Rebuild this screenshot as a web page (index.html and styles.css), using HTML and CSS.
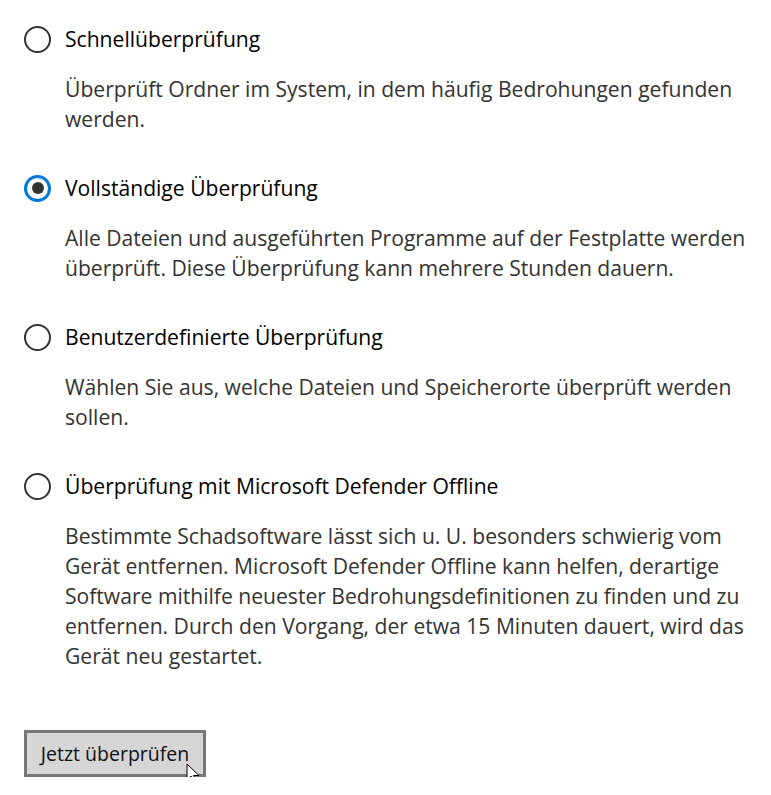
FILE: index.html
```html
<!DOCTYPE html>
<html lang="de">
<head>
<meta charset="utf-8">
<link rel="stylesheet" href="styles.css">
</head>
<body>
<div class="page">
  <div class="option">
    <label class="radio-row"><span class="radio"></span><span class="title">Schnellüberprüfung</span></label>
    <p class="desc">Überprüft Ordner im System, in dem häufig Bedrohungen gefunden werden.</p>
  </div>
  <div class="option">
    <label class="radio-row"><span class="radio checked"></span><span class="title">Vollständige Überprüfung</span></label>
    <p class="desc">Alle Dateien und ausgeführten Programme auf der Festplatte werden überprüft. Diese Überprüfung kann mehrere Stunden dauern.</p>
  </div>
  <div class="option">
    <label class="radio-row"><span class="radio"></span><span class="title">Benutzerdefinierte Überprüfung</span></label>
    <p class="desc">Wählen Sie aus, welche Dateien und Speicherorte überprüft werden sollen.</p>
  </div>
  <div class="option">
    <label class="radio-row"><span class="radio"></span><span class="title">Überprüfung mit Microsoft Defender Offline</span></label>
    <p class="desc">Bestimmte Schadsoftware lässt sich u. U. besonders schwierig vom Gerät entfernen. Microsoft Defender Offline kann helfen, derartige Software mithilfe neuester Bedrohungsdefinitionen zu finden und zu entfernen. Durch den Vorgang, der etwa 15 Minuten dauert, wird das Gerät neu gestartet.</p>
  </div>
  <div class="actions">
    <button class="btn">Jetzt überprüfen</button>
    <svg class="cursor" width="14" height="22" viewBox="0 0 14 22"><path d="M1 1 L1 17 L5 13 L8 20 L10.5 19 L7.5 12.5 L13 12.5 Z" fill="#fff" stroke="#000" stroke-width="1" stroke-linejoin="round"/></svg>
  </div>
</div>
</body>
</html>
```
FILE: styles.css
```css
html, body {
  margin: 0;
  padding: 0;
  background: #fff;
}
body {
  font-family: "Open Sans", "Noto Sans", "Liberation Sans", sans-serif;
  font-size: 21.1px;
  line-height: 30px;
  color: #000;
}
.page {
  padding: 24px 10px 0 24px;
}
.option {
  margin-bottom: 39px;
}
.radio-row {
  display: flex;
  align-items: center;
  gap: 14px;
  height: 30px;
}
.radio {
  box-sizing: border-box;
  width: 27px;
  height: 27px;
  border: 2px solid #333;
  border-radius: 50%;
  display: flex;
  align-items: center;
  justify-content: center;
  flex: none;
}
.radio.checked {
  border: 3px solid #0078d7;
}
.radio.checked::after {
  content: "";
  width: 12px;
  height: 12px;
  border-radius: 50%;
  background: #333;
}
.title {
  color: #000;
}
.desc {
  margin: 20px 0 0 41px;
  color: #333;
}
.actions {
  position: relative;
  margin-top: 59px;
}
.btn {
  box-sizing: border-box;
  width: 182px;
  height: 47px;
  background: #d6d6d6;
  border: 3px solid #777;
  font: inherit;
  font-size: 19.5px;
  color: #111;
  padding: 0;
}
.cursor {
  position: absolute;
  left: 162px;
  top: 33px;
}
```
